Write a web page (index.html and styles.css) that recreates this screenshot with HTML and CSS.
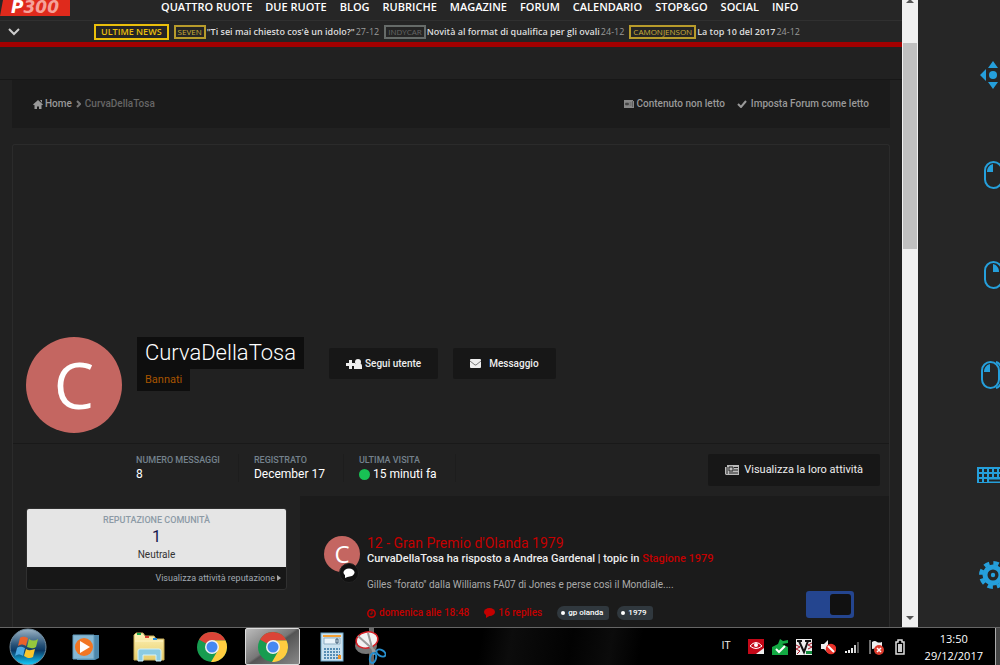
FILE: index.html
```html
<!DOCTYPE html>
<html lang="it">
<head>
<meta charset="utf-8">
<meta name="viewport" content="width=device-width, initial-scale=1">
<title>CurvaDellaTosa - P300</title>
<link rel="stylesheet" href="styles.css">
</head>
<body>
<div class="screen">
  <div class="browser">
    <main class="page">
      <header class="site-header">
        <a class="logo" href="#">P<span>300</span></a>
        <nav class="menu">
          <a href="#">QUATTRO RUOTE</a><a href="#">DUE RUOTE</a><a href="#">BLOG</a><a href="#">RUBRICHE</a><a href="#">MAGAZINE</a><a href="#">FORUM</a><a href="#">CALENDARIO</a><a href="#">STOP&amp;GO</a><a href="#">SOCIAL</a><a href="#">INFO</a>
        </nav>
      </header>
      <div class="ticker">
        <button class="ticker-toggle" aria-label="Apri"><svg width="12" height="8" viewBox="0 0 12 8"><path d="M1 1l5 5 5-5" fill="none" stroke="#ccc" stroke-width="2"/></svg></button>
        <strong class="ticker-title">ULTIME NEWS</strong>
        <div class="news"><span class="tag">SEVEN</span><a href="#">"Ti sei mai chiesto cos'è un idolo?"</a><time>27-12</time></div>
        <div class="news"><span class="tag tag-grey">INDYCAR</span><a href="#">Novità al format di qualifica per gli ovali</a><time>24-12</time></div>
        <div class="news"><span class="tag">CAMONJENSON</span><a href="#">La top 10 del 2017</a><time>24-12</time></div>
      </div>
      <div class="spacer"></div>
      <div class="crumbs">
        <nav class="crumb-path">
          <a href="#"><svg width="10" height="9" viewBox="0 0 10 9"><path d="M5 0l5 4.500-1 .8-4-3.500-4 3.500-1-.8zM5 1.800l3.500 3V9H6V6.500H4V9H1.500V4.800zM7 0h2v3z" fill="#999"/></svg>Home</a>
          <svg width="5" height="8" viewBox="0 0 5 8"><path d="M1 1l3 3-3 3" fill="none" stroke="#777" stroke-width="2"/></svg>
          <span>CurvaDellaTosa</span>
        </nav>
        <div class="crumb-links">
          <a href="#"><svg width="10" height="8" viewBox="0 0 10 8"><path d="M0 0h9v1h1v7H0z" fill="#888"/><path d="M1.500 3h3v2h-3zM5.500 3h2M5.500 5h2M8.500 1v6" fill="#444" stroke="#444" stroke-width=".6"/></svg>Contenuto non letto</a>
          <a class="mark-read" href="#"><svg width="10" height="8" viewBox="0 0 10 8"><path d="M1 4l3 3 5-6" fill="none" stroke="#999" stroke-width="2"/></svg>Imposta Forum come letto</a>
        </div>
      </div>
      <section class="profile">
        <div class="cover">
          <span class="avatar">C</span>
          <div class="identity"><h1>CurvaDellaTosa</h1><span class="group">Bannati</span></div>
          <div class="actions">
            <button class="btn"><svg width="16" height="12" viewBox="0 0 16 12"><path d="M0 5h3V2h3v3h3v3H6v3H3V8H0z" fill="#eee"/><circle cx="12" cy="4" r="3" fill="#eee"/><path d="M8 8q0-3 4-3t4 3v3H8z" fill="#eee"/></svg>Segui utente</button>
            <button class="btn btn-message"><svg width="11" height="9" viewBox="0 0 11 9"><rect width="11" height="9" rx="1" fill="#eee"/><path d="M0 2l5 4h1l5-4" fill="none" stroke="#777"/></svg>Messaggio</button>
          </div>
        </div>
        <div class="stats">
          <dl>
            <div><dt>NUMERO MESSAGGI</dt><dd>8</dd></div>
            <div><dt>REGISTRATO</dt><dd>December 17</dd></div>
            <div><dt>ULTIMA VISITA</dt><dd><i class="online"></i>15 minuti fa</dd></div>
          </dl>
          <button class="btn btn-activity"><svg width="14" height="10" viewBox="0 0 14 10"><path d="M2 0h12v10H1L0 9V2h2z" fill="#bbb"/><path d="M4 2h4v4H4zM9 2.500h4M9 5h4M4 8h9M2 2v7" fill="none" stroke="#222"/></svg>Visualizza la loro attività</button>
        </div>
        <div class="columns">
          <aside class="left">
            <div class="reputation">
              <div class="rep-score"><h2>REPUTAZIONE COMUNITÀ</h2><span class="score">1</span><span>Neutrale</span></div>
              <a class="rep-link" href="#">Visualizza attività reputazione<svg width="4" height="6" viewBox="0 0 4 6"><path d="M0 0l4 3-4 3z" fill="#aaa"/></svg></a>
            </div>
          </aside>
          <article class="activity">
            <div class="author"><span class="avatar avatar-small">C</span><svg class="reply-badge" width="20" height="20" viewBox="0 0 20 20"><circle cx="10" cy="10" r="9.500" fill="#111" stroke="#222"/><ellipse cx="10" cy="9.500" rx="5.500" ry="4" fill="#fff"/><path d="M6 11v4l5-2z" fill="#fff"/></svg></div>
            <div class="post">
              <h3><a href="#">12 - Gran Premio d'Olanda 1979</a></h3>
              <p class="byline">CurvaDellaTosa ha risposto a Andrea Gardenal | topic in <a href="#">Stagione 1979</a></p>
              <p class="excerpt">Gilles "forato" dalla Williams FA07 di Jones e perse così il Mondiale....</p>
              <div class="meta">
                <a href="#"><svg width="9" height="9" viewBox="0 0 9 9"><circle cx="4.500" cy="4.500" r="3.700" fill="none" stroke="#c40000" stroke-width="1.500"/><path d="M5 2v3H3" fill="none" stroke="#c40000"/></svg>domenica alle 18:48</a>
                <a href="#"><svg width="11" height="10" viewBox="0 0 11 10"><ellipse cx="5.500" cy="4" rx="5.500" ry="4" fill="#c40000"/><path d="M2 6v4l5-3z" fill="#c40000"/></svg>16 replies</a>
                <span class="labels"><a class="label" href="#">gp olanda</a><a class="label" href="#">1979</a></span>
              </div>
            </div>
          </article>
        </div>
      </section>
      <input class="switch" type="checkbox" checked aria-label="Tema scuro">
    </main>
    <div class="scrollbar" aria-hidden="true">
      <svg width="8" height="4" viewBox="0 0 8 4"><path d="M0 3l3-3h2l3 3z" fill="#555"/></svg>
      <div class="thumb"></div>
      <svg class="down" width="8" height="4" viewBox="0 0 8 4"><path d="M0 0h8L4 4z" fill="#555"/></svg>
    </div>
    <aside class="remote">
      <button aria-label="Sposta"><svg width="32" height="28" viewBox="0 0 32 28"><g fill="#259fdb"><circle cx="16" cy="14" r="4"/><path d="M16 0l5 7H11zM16 28l5-7H11zM3 14l6-6v12zM29 14l-6-6v12z"/></g></svg></button>
      <button aria-label="Clic sinistro"><svg width="32" height="28" viewBox="0 0 32 28"><rect x="8" y="1" width="17" height="26" rx="8.500" fill="none" stroke="#259fdb" stroke-width="2"/><path d="M10 11c0-4 2-7 6-8v8z" fill="#259fdb"/></svg></button>
      <button aria-label="Clic destro"><svg width="32" height="28" viewBox="0 0 32 28"><rect x="8" y="1" width="17" height="26" rx="8.500" fill="none" stroke="#259fdb" stroke-width="2"/><path d="M16 3c4 1 6 4 6 8h-6z" fill="#259fdb"/></svg></button>
      <button aria-label="Doppio clic"><svg width="32" height="28" viewBox="0 0 32 28"><rect x="5" y="1" width="17" height="26" rx="8.500" fill="none" stroke="#259fdb" stroke-width="2"/><path d="M7 11c0-4 2-7 6-8v8z" fill="#259fdb"/><path d="M19 1c9 2 9 24 0 26" fill="none" stroke="#259fdb" stroke-width="2"/></svg></button>
      <button aria-label="Tastiera"><svg width="32" height="28" viewBox="0 0 32 28"><path d="M0 6h32v16H0z" fill="#259fdb"/><path d="M2 9.500h30M2 14.500h30" stroke="#242424" stroke-width="3" stroke-dasharray="3 2"/><path d="M2 19.500h8" stroke="#242424" stroke-width="3" stroke-dasharray="3 2"/><path d="M12 19.500h14" stroke="#242424" stroke-width="2"/></svg></button>
      <button aria-label="Impostazioni"><svg width="32" height="28" viewBox="0 0 32 28"><circle cx="16" cy="14" r="8" fill="none" stroke="#259fdb" stroke-width="5"/><circle cx="16" cy="14" r="12" fill="none" stroke="#259fdb" stroke-width="4" stroke-dasharray="5.400 4.024"/><circle cx="16" cy="14" r="2.200" fill="#259fdb"/></svg></button>
    </aside>
  </div>
  <footer class="taskbar">
    <svg class="defs" width="0" height="0" aria-hidden="true"><defs>
      <linearGradient id="orb" x1="0" y1="0" x2="0" y2="1"><stop offset="0" stop-color="#9cb4c5"/><stop offset=".45" stop-color="#255076"/><stop offset=".6" stop-color="#0b3864"/><stop offset="1" stop-color="#13cfff"/></linearGradient>
      <linearGradient id="folder" x1="0" y1="0" x2="0" y2="1"><stop offset="0" stop-color="#fff3b8"/><stop offset="1" stop-color="#e6cd6b"/></linearGradient>
      <symbol id="chrome" viewBox="0 0 30 30"><circle cx="15" cy="15" r="15" fill="#179c50"/><path d="M15 15L2 7.500A15 15 0 0 1 28.500 8.500H15z" fill="#db4437"/><path d="M15 8.500h13.500A15 15 0 0 1 14 30l7-12z" fill="#ffcd40"/><circle cx="15" cy="15" r="7" fill="#f2f2f2"/><circle cx="15" cy="15" r="5.500" fill="#4688f1"/></symbol>
    </defs></svg>
    <div class="apps">
      <button class="app" aria-label="Start"><svg width="38" height="38" viewBox="0 0 38 38"><circle cx="19" cy="19" r="18" fill="url(#orb)" stroke="#718c9e"/><path d="M11 10c3-2 5-1 8 0l-2 8c-3-2-5-2-8 0z" fill="#ea622b"/><path d="M20 11c3 2 6 2 9 0l-2 8c-3 2-6 1-9 0z" fill="#94c83d"/><path d="M8 20c3-2 5-1 8 0l-2 8c-3-2-5-2-8 0z" fill="#4ba9e3"/><path d="M17 21c3 2 6 1 9 0l-2 8c-3 2-6 1-9-1z" fill="#fbc62c"/></svg></button>
      <button class="app" aria-label="Media Player"><svg width="28" height="28" viewBox="0 0 28 28"><path d="M5 2h22v23l-4 2H5z" fill="#4d87ab"/><path d="M1 2h21v24H1z" fill="#86b7d3" stroke="#619abb"/><circle cx="12" cy="14" r="9" fill="#f27623"/><path d="M8 8l10 6-10 6z" fill="#fff"/></svg></button>
      <button class="app" aria-label="Esplora risorse"><svg width="32" height="30" viewBox="0 0 32 30"><path d="M1 3l2-2h7l2 3h9l2 3h8v21H1z" fill="url(#folder)" stroke="#c8ac57"/><path d="M4 2h4" stroke="#19a84c" stroke-width="2"/><path d="M12 5h4" stroke="#d94332" stroke-width="2"/><path d="M20 7h4" stroke="#268ddd" stroke-width="2"/><path d="M2 9h28" stroke="#fff5c5"/><path d="M5 29V19q0-2 2-2h19q2 0 2 2v10h-5v-6H10v6z" fill="#8bcbe2" stroke="#d2f2fb"/></svg></button>
      <button class="app" aria-label="Chrome"><svg width="30" height="30"><use href="#chrome"/></svg></button>
      <button class="app app-active" aria-label="Chrome, finestra attiva"><svg width="30" height="30"><use href="#chrome"/></svg></button>
      <button class="app" aria-label="Calcolatrice"><svg width="24" height="30" viewBox="0 0 24 30"><rect x="1" y="1" width="22" height="28" fill="#cae2ef" stroke="#6da7ca"/><path d="M3 4h18" stroke="#f3a035" stroke-width="2"/><path d="M4 6h16v6H4z" fill="#e9f4fa" stroke="#8eafc4"/><path d="M16 7h2v4h-2z" fill="none" stroke="#33556f"/><path d="M4 17h16M4 20h16M4 23h16M4 26h16" stroke="#568eb4" stroke-width="2" stroke-dasharray="2 1"/><path d="M18 23h3v4h-3z" fill="#ef9226"/></svg></button>
      <button class="app app-snip" aria-label="Strumento di cattura"><svg width="32" height="38" viewBox="0 0 32 38"><path d="M15 0h5v38h-5z" fill="#686868"/><ellipse cx="12" cy="18" rx="11" ry="8" fill="#777"/><ellipse cx="13" cy="12" rx="11" ry="8" fill="#f2f2f2" stroke="#d61f25" stroke-width="1.500" transform="rotate(-12 13 12)"/><path d="M4 8l18 16M14 5l6 22" stroke="#9a9a9a" stroke-width="2"/><ellipse cx="19" cy="30" rx="3" ry="5" fill="none" stroke="#2790cf" stroke-width="2" transform="rotate(15 19 30)"/><ellipse cx="27" cy="25" rx="3" ry="5" fill="none" stroke="#2790cf" stroke-width="2" transform="rotate(-60 27 25)"/></svg></button>
    </div>
    <div class="tray">
      <span class="lang">IT</span>
      <svg width="16" height="16" viewBox="0 0 16 16"><path d="M0 0h16v12l-4 3H0z" fill="#c40818"/><path d="M8 15l8-6v6z" fill="#eee"/><path d="M2 7q6-7 12 0q-6 5-12 0z" fill="#c40818" stroke="#fff"/><circle cx="8" cy="6" r="2" fill="#fff"/></svg>
      <svg width="16" height="16" viewBox="0 0 16 16"><path d="M0 8l6-3 2-5 3 2 5-1v3l-6 1 6 3v8H0z" fill="#13a943"/><path d="M4 10l3 3 6-6" fill="none" stroke="#fff" stroke-width="2"/></svg>
      <svg width="16" height="16" viewBox="0 0 16 16"><path d="M0 0h16v16H0z" fill="#eee"/><path d="M3 2l5 11 4-11M1 2h5M9 2h6" fill="none" stroke="#111" stroke-width="2"/><path d="M0 6l4 2-4 2 4 2-3 3M16 4l-4 2 4 2-4 2" fill="none" stroke="#a71928"/><path d="M10 12h6v3h-6z" fill="#138b3d"/></svg>
      <svg width="16" height="16" viewBox="0 0 16 16"><path d="M1 5h3l4-4v13l-4-4H1z" fill="#eee"/><circle cx="11" cy="10" r="4.500" fill="#e8352c" stroke="#ed3028" stroke-width="1.500"/><path d="M8 7l6 6" stroke="#fff" stroke-width="2"/></svg>
      <svg width="16" height="16" viewBox="0 0 16 16"><path d="M1 12v2h2v-2zM4 11v3h2v-3zM7 9v5h2V9z" fill="#eee"/><path d="M10 6v8h2V6z" fill="#ccc"/><path d="M13 3v11h2V3z" fill="#555"/></svg>
      <svg width="16" height="16" viewBox="0 0 16 16"><path d="M2 1v14" stroke="#ddd"/><path d="M4 3q3-2 5 0 2 1 5 0v7q-3 2-5 0-2-1-5 0z" fill="#eee"/><circle cx="11" cy="11" r="5" fill="#dc3b2d"/><path d="M9 9l4 4M13 9l-4 4" stroke="#fff" stroke-width="1.500"/></svg>
      <svg width="16" height="16" viewBox="0 0 16 16"><path d="M6 1h4v2h2v12H4V3h2z" fill="none" stroke="#ddd" stroke-width="1.500"/><path d="M6 5h4v8H6z" fill="#ccc"/></svg>
      <div class="clock"><time>13:50</time><time>29/12/2017</time></div>
      <button class="desktop" aria-label="Mostra desktop"></button>
    </div>
  </footer>
</div>
</body>
</html>
```
FILE: styles.css
```css
* { box-sizing: border-box; }
body, h1, h2, h3, p, dl, dd { margin: 0; }
body { background: #222; color: #eee; font: 11px/16px Roboto, "Liberation Sans", sans-serif; }
a { color: inherit; text-decoration: none; }
button { border: 0; padding: 0; background: none; color: inherit; font: inherit; }
svg { display: block; flex: none; }

.screen { display: flex; flex-direction: column; height: 100vh; overflow: hidden; }
.browser { display: flex; flex: 1; min-height: 0; }
.page { position: relative; flex: 1; min-width: 0; display: flex; flex-direction: column; overflow: hidden; background: #212121; }

.site-header { flex: none; display: flex; align-items: flex-start; height: 21px; background: #262626; border-bottom: 1px solid #303030; }
.logo { width: 70px; height: 16px; background: #df2a1c; color: #fff; font: italic bold 17px/15px "DejaVu Sans", sans-serif; text-align: center; clip-path: polygon(3px 0, 100% 0, 100% 100%, 0 100%); }
.logo span { color: #f5a29a; }
.menu { display: flex; gap: 13px; margin-left: 91px; font: 600 11px/14px "Open Sans", sans-serif; color: #fff; white-space: nowrap; }
.ticker { flex: none; display: flex; align-items: center; height: 26px; background: #252525; border-bottom: 5px solid #a30000; font: 9px/14px "Open Sans", sans-serif; white-space: nowrap; }
.ticker-toggle { margin: 0 74px 0 8px; }
.ticker-title { padding: 0 5px; border: 2px solid #eabf0b; color: #eabf0b; font-weight: 600; line-height: 12px; }
.news { display: flex; align-items: center; gap: 1px; margin-left: 5px; }
.news a { color: #ddd; font-weight: 600; }
.news time { color: #999; }
.tag { padding: 0 2px; border: 2px solid #b79b2b; color: #cbae37; font-size: 8px; line-height: 10px; }
.tag-grey { border-color: #666b69; color: #666; }
.spacer { flex: none; height: 33px; border-bottom: 1px solid #171717; }

.crumbs { flex: none; display: flex; align-items: center; justify-content: space-between; height: 48px; margin: 0 12px; padding: 0 21px; background: #1b1b1b; color: #999; font-size: 10px; font-weight: 500; }
.crumb-path, .crumb-links, .crumbs a { display: flex; align-items: center; }
.crumb-path { gap: 4px; }
.crumb-path span { color: #666; }
.crumbs a { gap: 2px; }
.crumb-links { gap: 12px; }
.crumbs .mark-read { gap: 4px; }

.profile { flex: 1; display: flex; flex-direction: column; margin: 16px 12px 0; border: 1px solid #2b2b2b; border-bottom: 0; border-radius: 3px 3px 0 0; }
.cover { flex: none; display: flex; align-items: flex-start; padding: 192px 13px 10px; border-bottom: 1px solid #191919; }
.avatar { flex: none; width: 96px; height: 96px; border-radius: 50%; background: #c46661; color: #fff; font: 500 64px/96px "Open Sans", sans-serif; text-align: center; }
.identity { margin-left: 15px; }
.identity h1 { padding: 0 8px; background: #0e0e0e; font-size: 22px; line-height: 32px; font-weight: 300; color: #fff; }
.group { display: inline-block; padding: 0 8px; background: #0e0e0e; color: #a75400; line-height: 22px; }
.actions { display: flex; gap: 15px; margin: 11px 0 0 25px; }
.btn { display: flex; align-items: center; justify-content: center; gap: 3px; height: 31px; padding: 0 17px; border-radius: 2px; background: #171717; color: #eee; font-size: 10px; font-weight: 500; white-space: nowrap; }
.btn-message { gap: 8px; }
.stats { flex: none; display: flex; justify-content: space-between; align-items: center; height: 52px; padding: 0 9px 0 108px; }
.stats dl { display: flex; margin-bottom: 4px; white-space: nowrap; }
.stats dl div { padding: 0 18px 0 15px; border-right: 1px solid #1d1d1d; }
.stats dt { color: #74818d; font-size: 9px; line-height: 13px; font-weight: 500; }
.stats dd { display: flex; align-items: center; gap: 3px; color: #fff; font-size: 12px; line-height: 15px; }
.online { width: 11px; height: 11px; border-radius: 50%; background: #18c254; }
.btn-activity { gap: 5px; font-size: 11px; font-weight: 400; height: 32px; }
.columns { flex: 1; display: grid; grid-template-columns: 287px 1fr; }
.left { padding: 12px 13px; }
.reputation { border: 1px solid #303030; border-radius: 3px; background: #171717; overflow: hidden; }
.rep-score { display: flex; flex-direction: column; align-items: center; padding: 4px 0 5px; background: #e5e5e5; color: #333; font-size: 10px; line-height: 15px; }
.rep-score h2 { color: #8c9aa5; font-size: 9px; line-height: 14px; font-weight: 500; }
.score { color: #13164c; font-size: 16px; line-height: 20px; }
.rep-link { display: flex; align-items: center; justify-content: flex-end; gap: 2px; padding: 3px 5px; color: #a0a9b2; font-size: 9px; }
.activity { display: flex; gap: 7px; padding: 40px 24px 0; background: #1b1b1b; white-space: nowrap; }
.author { position: relative; flex: none; }
.avatar-small { display: block; width: 36px; height: 36px; font-size: 24px; line-height: 36px; }
.reply-badge { position: absolute; left: 15px; top: 27px; }
.activity a { color: #c40000; }
.activity h3 { font-size: 14px; line-height: 15px; font-weight: 400; }
.byline { font-weight: 500; line-height: 16px; }
.excerpt { margin-top: 10px; color: #aaa; font-size: 10px; }
.meta { display: flex; align-items: center; gap: 15px; margin-top: 12px; font-size: 10px; font-weight: 500; }
.meta > a { display: flex; align-items: center; gap: 3px; }
.labels { display: flex; gap: 8px; }
.activity .label { display: flex; align-items: center; gap: 3px; padding: 0 6px 0 4px; border-radius: 7px 3px 3px 7px; background: #30383e; color: #fff; font-size: 8px; line-height: 14px; }
.label::before { content: ""; width: 4px; height: 4px; border-radius: 50%; background: #fff; }
.switch { appearance: none; position: absolute; right: 48px; bottom: 9px; width: 48px; height: 27px; margin: 0; padding: 3px; border-radius: 3px; background: #24458f; display: flex; justify-content: flex-end; }
.switch::before { content: ""; width: 21px; border-radius: 3px; background: #111; }

.scrollbar { flex: none; display: flex; flex-direction: column; align-items: center; width: 16px; background: #f0f0f0; }
.thumb { width: 14px; height: 206px; margin-top: 39px; background: #c0c0c0; }
.down { margin-top: auto; margin-bottom: 7px; }
.remote { flex: none; width: 82px; padding: 25px 0 0 59px; background: #262626; overflow: hidden; }
.remote button { display: flex; align-items: center; width: 32px; height: 100px; }

.taskbar { flex: none; display: flex; justify-content: space-between; height: 38px; background: linear-gradient(100deg, #000 0 48%, #0c0c0c 51%, #020202 57%, #0b0b0b 61%, #000 64%); border-top: 1px solid #666; }
.defs { position: absolute; }
.apps, .tray { display: flex; align-items: center; }
.app { display: flex; align-items: center; justify-content: center; width: 60px; height: 37px; }
.app:first-of-type { width: 56px; }
.app:nth-of-type(3) { width: 66px; }
.app-active { width: 55px; margin-left: 3px; border: 1px solid #ddd; border-radius: 2px; background: linear-gradient(145deg, #bbb, #777 48%, #555 52%, #888); }
.app:nth-of-type(6) { width: 64px; }
.app-snip { width: 12px; }
.tray { gap: 8px; }
.lang { margin: 0 9px 4px 0; font-family: "Open Sans", sans-serif; }
.clock { display: flex; flex-direction: column; align-items: center; margin: 0 4px 0 9px; font: 11px/17px "Open Sans", sans-serif; color: #fff; }
.desktop { width: 5px; height: 37px; border-left: 1px solid #aaa; background: #444; }
```
